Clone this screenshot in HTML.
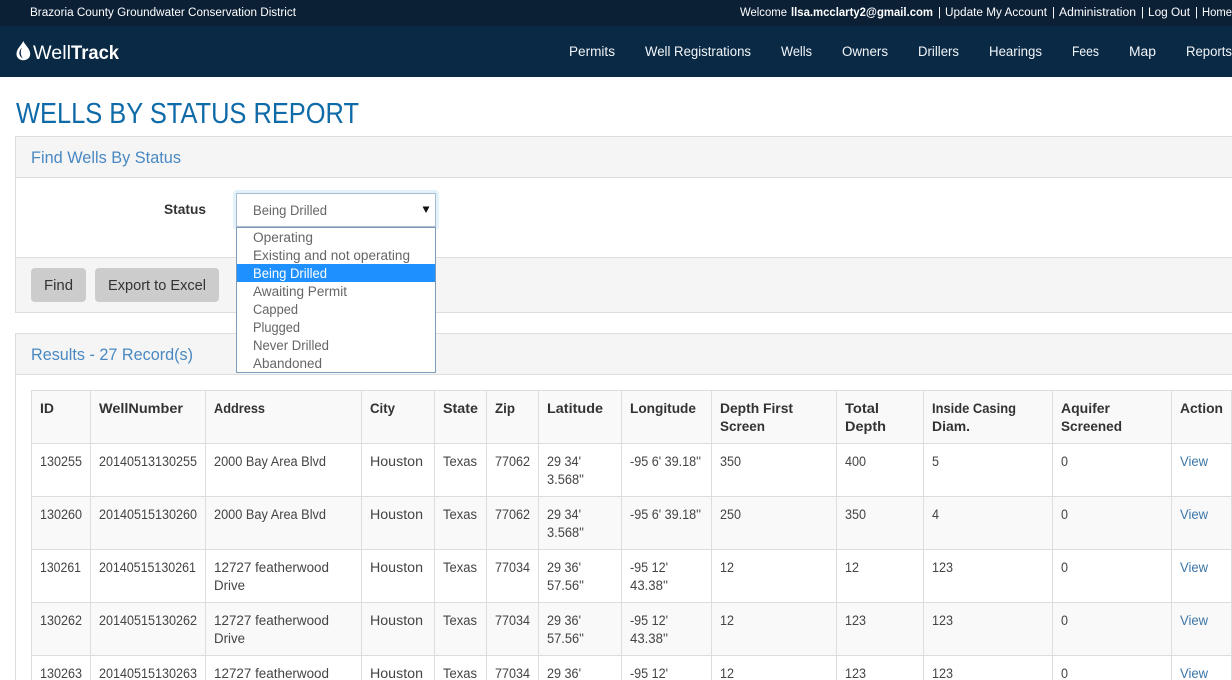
<!DOCTYPE html>
<html><head><meta charset="utf-8"><title>Wells By Status Report</title>
<style>
html,body{margin:0;padding:0;width:1232px;height:680px;overflow:hidden;background:#fff}
svg{display:block}
text{font-family:"Liberation Sans",Arial,sans-serif;font-size:13.5px;fill:#444;white-space:pre}
.b{font-weight:700;fill:#333;font-size:13.5px}
.w{fill:#fff;font-size:11.5px}
.n{fill:#f2f5f8;font-size:13.5px}
.l{fill:#3d76a8}
.h{fill:#4a88c2;font-size:17px}
.o{fill:#666;font-size:13.5px}
</style></head><body>
<svg width="1232" height="680" viewBox="0 0 1232 680" xmlns="http://www.w3.org/2000/svg" shape-rendering="crispEdges">
<rect width="1232" height="26" fill="#0b1f35"/>
<rect y="26" width="1232" height="51" fill="#0a2945"/>
<text class="w" x="30" y="16" textLength="266" lengthAdjust="spacingAndGlyphs">Brazoria County Groundwater Conservation District</text>
<text class="w" x="740" y="16" textLength="47" lengthAdjust="spacingAndGlyphs">Welcome</text>
<text class="w" style="font-weight:700" x="791" y="16" textLength="142" lengthAdjust="spacingAndGlyphs">llsa.mcclarty2@gmail.com</text>
<text class="w" x="938" y="16">|</text>
<text class="w" x="945" y="16" textLength="102" lengthAdjust="spacingAndGlyphs">Update My Account</text>
<text class="w" x="1052" y="16">|</text>
<text class="w" x="1059" y="16" textLength="77" lengthAdjust="spacingAndGlyphs">Administration</text>
<text class="w" x="1141" y="16">|</text>
<text class="w" x="1148" y="16" textLength="42" lengthAdjust="spacingAndGlyphs">Log Out</text>
<text class="w" x="1195" y="16">|</text>
<text class="w" x="1202" y="16" textLength="30" lengthAdjust="spacingAndGlyphs">Home</text>

<g shape-rendering="auto">
<path d="M23.3 41C21.5 45.5 16.5 48.5 16.5 54C16.5 57.8 19.5 60.2 23.3 60.2C27.1 60.2 30.2 57.8 30.2 54C30.2 48.5 25.1 45.5 23.3 41Z" fill="#fff"/>
<path d="M21.8 47.5C18.6 51 18.2 55.8 22.8 58.4C20.6 55.4 20.2 51.5 21.8 47.5Z" fill="#0a2945"/>
</g>
<text x="33" y="59" style="font-size:19px;fill:#fff" textLength="38" lengthAdjust="spacingAndGlyphs">Well</text>
<text x="71" y="59" style="font-size:19px;font-weight:700;fill:#fff" textLength="48" lengthAdjust="spacingAndGlyphs">Track</text>

<text class="n" x="569" y="56" textLength="46" lengthAdjust="spacingAndGlyphs">Permits</text>
<text class="n" x="645" y="56" textLength="106" lengthAdjust="spacingAndGlyphs">Well Registrations</text>
<text class="n" x="781" y="56" textLength="31" lengthAdjust="spacingAndGlyphs">Wells</text>
<text class="n" x="842" y="56" textLength="46" lengthAdjust="spacingAndGlyphs">Owners</text>
<text class="n" x="918" y="56" textLength="41" lengthAdjust="spacingAndGlyphs">Drillers</text>
<text class="n" x="989" y="56" textLength="53" lengthAdjust="spacingAndGlyphs">Hearings</text>
<text class="n" x="1072" y="56" textLength="27" lengthAdjust="spacingAndGlyphs">Fees</text>
<text class="n" x="1129" y="56" textLength="27" lengthAdjust="spacingAndGlyphs">Map</text>
<text class="n" x="1186" y="56" textLength="46" lengthAdjust="spacingAndGlyphs">Reports</text>

<text x="16" y="123" style="font-size:29px;fill:#0f6aa8" textLength="343" lengthAdjust="spacingAndGlyphs">WELLS BY STATUS REPORT</text>

<!-- panel 1 -->
<rect x="15" y="136" width="1217" height="177" fill="#ddd"/>
<rect x="16" y="137" width="1216" height="175" fill="#fff"/>
<rect x="16" y="137" width="1216" height="40" fill="#f5f5f5"/>
<rect x="16" y="177" width="1216" height="1" fill="#ddd"/>
<rect x="16" y="257" width="1216" height="1" fill="#ddd"/>
<rect x="16" y="258" width="1216" height="54" fill="#f5f5f5"/>
<text class="h" x="31" y="163" textLength="150" lengthAdjust="spacingAndGlyphs">Find Wells By Status</text>
<text class="b" x="164" y="214" textLength="42" lengthAdjust="spacingAndGlyphs">Status</text>

<rect x="233" y="190" width="206" height="40" rx="4" fill="#66afe9" opacity=".18" shape-rendering="auto"/>
<rect x="236.5" y="193.5" width="199" height="33" fill="#fff" stroke="#a9bccd"/>
<text x="253" y="215" class="o" textLength="74" lengthAdjust="spacingAndGlyphs">Being Drilled</text>
<path d="M422.5 206.5H429.5L426 213Z" fill="#111" shape-rendering="auto"/>

<rect x="31" y="268" width="55" height="34" rx="4" fill="#ccc" shape-rendering="auto"/>
<text x="44" y="290" style="font-size:15px;fill:#333" textLength="29" lengthAdjust="spacingAndGlyphs">Find</text>
<rect x="95" y="268" width="124" height="34" rx="4" fill="#ccc" shape-rendering="auto"/>
<text x="108" y="290" style="font-size:15px;fill:#333" textLength="98" lengthAdjust="spacingAndGlyphs">Export to Excel</text>

<!-- panel 2 -->
<rect x="15" y="333" width="1217" height="347" fill="#ddd"/>
<rect x="16" y="334" width="1216" height="346" fill="#fff"/>
<rect x="16" y="334" width="1216" height="40" fill="#f5f5f5"/>
<rect x="16" y="374" width="1216" height="1" fill="#ddd"/>
<text class="h" x="31" y="360" textLength="162" lengthAdjust="spacingAndGlyphs">Results - 27 Record(s)</text>

<!-- table fill -->
<rect x="31" y="390" width="1201" height="53" fill="#f9f9f9"/>
<rect x="31" y="496" width="1201" height="53" fill="#f9f9f9"/>
<rect x="31" y="602" width="1201" height="53" fill="#f9f9f9"/>
<g fill="#ddd">
<rect x="31" y="390" width="1201" height="1"/><rect x="31" y="443" width="1201" height="1"/><rect x="31" y="496" width="1201" height="1"/><rect x="31" y="549" width="1201" height="1"/><rect x="31" y="602" width="1201" height="1"/><rect x="31" y="655" width="1201" height="1"/>
<rect x="31" y="390" width="1" height="290"/><rect x="90" y="390" width="1" height="290"/><rect x="205" y="390" width="1" height="290"/><rect x="361" y="390" width="1" height="290"/><rect x="434" y="390" width="1" height="290"/><rect x="486" y="390" width="1" height="290"/><rect x="538" y="390" width="1" height="290"/><rect x="621" y="390" width="1" height="290"/><rect x="711" y="390" width="1" height="290"/><rect x="836" y="390" width="1" height="290"/><rect x="923" y="390" width="1" height="290"/><rect x="1052" y="390" width="1" height="290"/><rect x="1171" y="390" width="1" height="290"/><rect x="1231" y="390" width="1" height="290"/>
</g>

<!-- header -->
<text class="b" x="40" y="413" textLength="14" lengthAdjust="spacingAndGlyphs">ID</text>
<text class="b" x="99" y="413" textLength="84" lengthAdjust="spacingAndGlyphs">WellNumber</text>
<text class="b" x="214" y="413" textLength="51" lengthAdjust="spacingAndGlyphs">Address</text>
<text class="b" x="370" y="413" textLength="25" lengthAdjust="spacingAndGlyphs">City</text>
<text class="b" x="443" y="413" textLength="35" lengthAdjust="spacingAndGlyphs">State</text>
<text class="b" x="495" y="413" textLength="20" lengthAdjust="spacingAndGlyphs">Zip</text>
<text class="b" x="547" y="413" textLength="56" lengthAdjust="spacingAndGlyphs">Latitude</text>
<text class="b" x="630" y="413" textLength="66" lengthAdjust="spacingAndGlyphs">Longitude</text>
<text class="b" x="720" y="413" textLength="73" lengthAdjust="spacingAndGlyphs">Depth First</text>
<text class="b" x="720" y="431" textLength="45" lengthAdjust="spacingAndGlyphs">Screen</text>
<text class="b" x="845" y="413" textLength="34" lengthAdjust="spacingAndGlyphs">Total</text>
<text class="b" x="845" y="431" textLength="41" lengthAdjust="spacingAndGlyphs">Depth</text>
<text class="b" x="932" y="413" textLength="84" lengthAdjust="spacingAndGlyphs">Inside Casing</text>
<text class="b" x="932" y="431" textLength="38" lengthAdjust="spacingAndGlyphs">Diam.</text>
<text class="b" x="1061" y="413" textLength="49" lengthAdjust="spacingAndGlyphs">Aquifer</text>
<text class="b" x="1061" y="431" textLength="61" lengthAdjust="spacingAndGlyphs">Screened</text>
<text class="b" x="1180" y="413" textLength="43" lengthAdjust="spacingAndGlyphs">Action</text>

<!-- row 1 -->
<text x="40" y="466" textLength="42" lengthAdjust="spacingAndGlyphs">130255</text>
<text x="99" y="466" textLength="98" lengthAdjust="spacingAndGlyphs">20140513130255</text>
<text x="214" y="466" textLength="112" lengthAdjust="spacingAndGlyphs">2000 Bay Area Blvd</text>
<text x="370" y="466" textLength="53" lengthAdjust="spacingAndGlyphs">Houston</text>
<text x="443" y="466" textLength="34" lengthAdjust="spacingAndGlyphs">Texas</text>
<text x="495" y="466" textLength="35" lengthAdjust="spacingAndGlyphs">77062</text>
<text x="547" y="466" textLength="34" lengthAdjust="spacingAndGlyphs">29 34'</text>
<text x="547" y="484" textLength="37" lengthAdjust="spacingAndGlyphs">3.568''</text>
<text x="630" y="466" textLength="71" lengthAdjust="spacingAndGlyphs">-95 6' 39.18''</text>
<text x="720" y="466" textLength="21" lengthAdjust="spacingAndGlyphs">350</text>
<text x="845" y="466" textLength="21" lengthAdjust="spacingAndGlyphs">400</text>
<text x="932" y="466" textLength="7" lengthAdjust="spacingAndGlyphs">5</text>
<text x="1061" y="466" textLength="7" lengthAdjust="spacingAndGlyphs">0</text>
<text class="l" x="1180" y="466" textLength="28" lengthAdjust="spacingAndGlyphs">View</text>

<!-- row 2 -->
<text x="40" y="519" textLength="42" lengthAdjust="spacingAndGlyphs">130260</text>
<text x="99" y="519" textLength="98" lengthAdjust="spacingAndGlyphs">20140515130260</text>
<text x="214" y="519" textLength="112" lengthAdjust="spacingAndGlyphs">2000 Bay Area Blvd</text>
<text x="370" y="519" textLength="53" lengthAdjust="spacingAndGlyphs">Houston</text>
<text x="443" y="519" textLength="34" lengthAdjust="spacingAndGlyphs">Texas</text>
<text x="495" y="519" textLength="35" lengthAdjust="spacingAndGlyphs">77062</text>
<text x="547" y="519" textLength="34" lengthAdjust="spacingAndGlyphs">29 34'</text>
<text x="547" y="537" textLength="37" lengthAdjust="spacingAndGlyphs">3.568''</text>
<text x="630" y="519" textLength="71" lengthAdjust="spacingAndGlyphs">-95 6' 39.18''</text>
<text x="720" y="519" textLength="21" lengthAdjust="spacingAndGlyphs">250</text>
<text x="845" y="519" textLength="21" lengthAdjust="spacingAndGlyphs">350</text>
<text x="932" y="519" textLength="7" lengthAdjust="spacingAndGlyphs">4</text>
<text x="1061" y="519" textLength="7" lengthAdjust="spacingAndGlyphs">0</text>
<text class="l" x="1180" y="519" textLength="28" lengthAdjust="spacingAndGlyphs">View</text>

<!-- row 3 -->
<text x="40" y="572" textLength="41" lengthAdjust="spacingAndGlyphs">130261</text>
<text x="99" y="572" textLength="97" lengthAdjust="spacingAndGlyphs">20140515130261</text>
<text x="214" y="572" textLength="115" lengthAdjust="spacingAndGlyphs">12727 featherwood</text>
<text x="214" y="590" textLength="31" lengthAdjust="spacingAndGlyphs">Drive</text>
<text x="370" y="572" textLength="53" lengthAdjust="spacingAndGlyphs">Houston</text>
<text x="443" y="572" textLength="34" lengthAdjust="spacingAndGlyphs">Texas</text>
<text x="495" y="572" textLength="35" lengthAdjust="spacingAndGlyphs">77034</text>
<text x="547" y="572" textLength="34" lengthAdjust="spacingAndGlyphs">29 36'</text>
<text x="547" y="590" textLength="37" lengthAdjust="spacingAndGlyphs">57.56''</text>
<text x="630" y="572" textLength="38" lengthAdjust="spacingAndGlyphs">-95 12'</text>
<text x="630" y="590" textLength="38" lengthAdjust="spacingAndGlyphs">43.38''</text>
<text x="720" y="572" textLength="14" lengthAdjust="spacingAndGlyphs">12</text>
<text x="845" y="572" textLength="14" lengthAdjust="spacingAndGlyphs">12</text>
<text x="932" y="572" textLength="21" lengthAdjust="spacingAndGlyphs">123</text>
<text x="1061" y="572" textLength="7" lengthAdjust="spacingAndGlyphs">0</text>
<text class="l" x="1180" y="572" textLength="28" lengthAdjust="spacingAndGlyphs">View</text>

<!-- row 4 -->
<text x="40" y="625" textLength="42" lengthAdjust="spacingAndGlyphs">130262</text>
<text x="99" y="625" textLength="98" lengthAdjust="spacingAndGlyphs">20140515130262</text>
<text x="214" y="625" textLength="115" lengthAdjust="spacingAndGlyphs">12727 featherwood</text>
<text x="214" y="643" textLength="31" lengthAdjust="spacingAndGlyphs">Drive</text>
<text x="370" y="625" textLength="53" lengthAdjust="spacingAndGlyphs">Houston</text>
<text x="443" y="625" textLength="34" lengthAdjust="spacingAndGlyphs">Texas</text>
<text x="495" y="625" textLength="35" lengthAdjust="spacingAndGlyphs">77034</text>
<text x="547" y="625" textLength="34" lengthAdjust="spacingAndGlyphs">29 36'</text>
<text x="547" y="643" textLength="37" lengthAdjust="spacingAndGlyphs">57.56''</text>
<text x="630" y="625" textLength="38" lengthAdjust="spacingAndGlyphs">-95 12'</text>
<text x="630" y="643" textLength="38" lengthAdjust="spacingAndGlyphs">43.38''</text>
<text x="720" y="625" textLength="14" lengthAdjust="spacingAndGlyphs">12</text>
<text x="845" y="625" textLength="21" lengthAdjust="spacingAndGlyphs">123</text>
<text x="932" y="625" textLength="21" lengthAdjust="spacingAndGlyphs">123</text>
<text x="1061" y="625" textLength="7" lengthAdjust="spacingAndGlyphs">0</text>
<text class="l" x="1180" y="625" textLength="28" lengthAdjust="spacingAndGlyphs">View</text>

<!-- row 5 -->
<text x="40" y="678" textLength="42" lengthAdjust="spacingAndGlyphs">130263</text>
<text x="99" y="678" textLength="98" lengthAdjust="spacingAndGlyphs">20140515130263</text>
<text x="214" y="678" textLength="115" lengthAdjust="spacingAndGlyphs">12727 featherwood</text>
<text x="370" y="678" textLength="53" lengthAdjust="spacingAndGlyphs">Houston</text>
<text x="443" y="678" textLength="34" lengthAdjust="spacingAndGlyphs">Texas</text>
<text x="495" y="678" textLength="35" lengthAdjust="spacingAndGlyphs">77034</text>
<text x="547" y="678" textLength="34" lengthAdjust="spacingAndGlyphs">29 36'</text>
<text x="630" y="678" textLength="38" lengthAdjust="spacingAndGlyphs">-95 12'</text>
<text x="720" y="678" textLength="14" lengthAdjust="spacingAndGlyphs">12</text>
<text x="845" y="678" textLength="21" lengthAdjust="spacingAndGlyphs">123</text>
<text x="932" y="678" textLength="21" lengthAdjust="spacingAndGlyphs">123</text>
<text x="1061" y="678" textLength="7" lengthAdjust="spacingAndGlyphs">0</text>
<text class="l" x="1180" y="678" textLength="28" lengthAdjust="spacingAndGlyphs">View</text>

<!-- dropdown -->
<rect x="236.5" y="227.5" width="199" height="145" fill="#fff" stroke="#7f9db9"/>
<rect x="237" y="264" width="198" height="18" fill="#1e90ff"/>
<text class="o" x="253" y="242" textLength="60" lengthAdjust="spacingAndGlyphs">Operating</text>
<text class="o" x="253" y="260" textLength="157" lengthAdjust="spacingAndGlyphs">Existing and not operating</text>
<text class="o" style="fill:#fff" x="253" y="278" textLength="74" lengthAdjust="spacingAndGlyphs">Being Drilled</text>
<text class="o" x="253" y="296" textLength="94" lengthAdjust="spacingAndGlyphs">Awaiting Permit</text>
<text class="o" x="253" y="314" textLength="45" lengthAdjust="spacingAndGlyphs">Capped</text>
<text class="o" x="253" y="332" textLength="47" lengthAdjust="spacingAndGlyphs">Plugged</text>
<text class="o" x="253" y="350" textLength="76" lengthAdjust="spacingAndGlyphs">Never Drilled</text>
<text class="o" x="253" y="368" textLength="69" lengthAdjust="spacingAndGlyphs">Abandoned</text>
</svg>
</body></html>
